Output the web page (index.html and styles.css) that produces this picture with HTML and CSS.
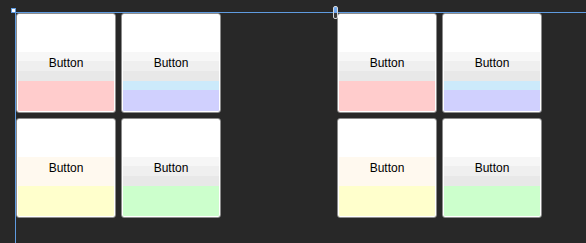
FILE: index.html
```html
<!DOCTYPE html>
<html>
<head>
<meta charset="utf-8">
<link rel="stylesheet" href="styles.css">
</head>
<body>
<div class="stage">
  <div class="guide-h"></div>
  <div class="guide-v"></div>
  <div class="handle-corner"></div>
  <div class="handle-split"></div>
  <div class="canvas">
    <div class="group">
      <div class="btn btn-red">Button</div>
      <div class="btn btn-blue">Button</div>
      <div class="btn btn-yellow">Button</div>
      <div class="btn btn-green">Button</div>
    </div>
    <div class="group">
      <div class="btn btn-red">Button</div>
      <div class="btn btn-blue">Button</div>
      <div class="btn btn-yellow">Button</div>
      <div class="btn btn-green">Button</div>
    </div>
  </div>
</div>
</body>
</html>
```
FILE: styles.css
```css
html, body {
  margin: 0;
  padding: 0;
  background: #282828;
  width: 586px;
  height: 243px;
  overflow: hidden;
}
.stage {
  position: relative;
  width: 586px;
  height: 243px;
}
.canvas {
  display: flex;
  gap: 116px;
  padding: 13px 0 0 16px;
}
.group {
  display: grid;
  grid-template-columns: 100px 100px;
  grid-auto-rows: 100px;
  gap: 5px 5px;
}
.btn {
  box-sizing: border-box;
  border: 1px solid #8c8c8c;
  border-radius: 3px;
  box-shadow: inset 0 0 0 1px #ffffff;
  display: flex;
  align-items: center;
  justify-content: center;
  font-family: "Liberation Sans", Arial, sans-serif;
  font-size: 12px;
  color: #000;
  padding-bottom: 1px;
}
.btn-red {
  background: linear-gradient(to bottom,
    #ffffff 0 38px, #f7f7f7 38px 47px, #efefef 47px 57px, #e8e8e8 57px 67px, #ffcccc 67px);
}
.btn-blue {
  background: linear-gradient(to bottom,
    #ffffff 0 38px, #f7f7f7 38px 47px, #efefef 47px 57px, #e8e8e8 57px 67px, #cceafb 67px 76px, #d0d0fe 76px);
}
.btn-yellow {
  background: linear-gradient(to bottom,
    #ffffff 0 38px, #fff9ef 38px 67px, #ffffcc 67px);
}
.btn-green {
  background: linear-gradient(to bottom,
    #ffffff 0 38px, #f6f6f6 38px 47px, #efefef 47px 57px, #e8e8e8 57px 67px, #ccffcc 67px);
}
.guide-h {
  position: absolute;
  left: 15px;
  right: 0;
  top: 12px;
  height: 1px;
  background: #5f9be0;
}
.guide-v {
  position: absolute;
  left: 15px;
  top: 12px;
  bottom: 0;
  width: 1px;
  background: #5f9be0;
}
.handle-corner {
  position: absolute;
  left: 11px;
  top: 8px;
  width: 3px;
  height: 3px;
  border: 1px solid #5f9be0;
  background: #ffffff;
}
.handle-split {
  position: absolute;
  left: 333px;
  top: 6px;
  width: 3px;
  height: 11px;
  border: 1px solid #d8d8d8;
  border-radius: 2px;
  background: linear-gradient(to bottom, #6ea6ee 0 6px, #3a3a3a 6px);
}
```
